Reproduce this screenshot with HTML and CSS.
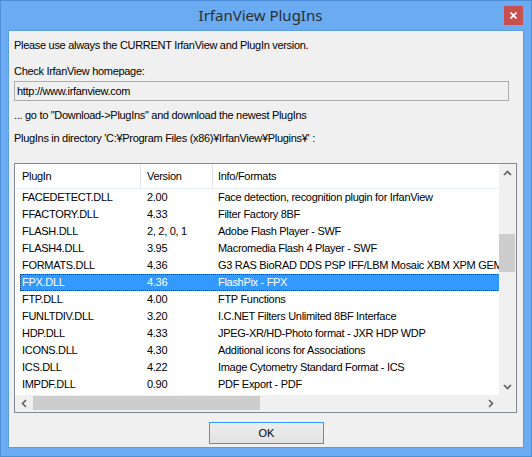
FILE: index.html
```html
<!DOCTYPE html>
<html>
<head>
<meta charset="utf-8">
<link rel="stylesheet" href="styles.css">
</head>
<body>
<div class="window">
  <div class="titlebar">
    <div class="title">IrfanView PlugIns</div>
    <div class="close"><svg width="7" height="7" viewBox="0 0 7 7"><path d="M0.5 0.5 L6.5 6.5 M6.5 0.5 L0.5 6.5" stroke="#fff" stroke-width="1.8"/></svg></div>
  </div>
  <div class="client">
    <div class="line l1">Please use always the CURRENT IrfanView and PlugIn version.</div>
    <div class="line l2">Check IrfanView homepage:</div>
    <div class="edit">http://www.irfanview.com</div>
    <div class="line l3">... go to "Download-&gt;PlugIns" and download the newest PlugIns</div>
    <div class="line l4">PlugIns in directory 'C:¥Program Files (x86)¥IrfanView¥Plugins¥' :</div>
    <div class="list">
      <div class="content">
        <div class="header">
          <div class="hc c1">PlugIn</div>
          <div class="hc c2">Version</div>
          <div class="hc c3">Info/Formats</div>
        </div>
        <div class="rows">
          <div class="row"><span class="c1">FACEDETECT.DLL</span><span class="c2">2.00</span><span class="c3">Face detection, recognition plugin for IrfanView</span></div>
          <div class="row"><span class="c1">FFACTORY.DLL</span><span class="c2">4.33</span><span class="c3">Filter Factory 8BF</span></div>
          <div class="row"><span class="c1">FLASH.DLL</span><span class="c2">2, 2, 0, 1</span><span class="c3">Adobe Flash Player - SWF</span></div>
          <div class="row"><span class="c1">FLASH4.DLL</span><span class="c2">3.95</span><span class="c3">Macromedia Flash 4 Player - SWF</span></div>
          <div class="row"><span class="c1">FORMATS.DLL</span><span class="c2">4.36</span><span class="c3">G3 RAS BioRAD DDS PSP IFF/LBM Mosaic XBM XPM GEM</span></div>
          <div class="row selected"><span class="c1">FPX.DLL</span><span class="c2">4.36</span><span class="c3">FlashPix - FPX</span></div>
          <div class="row"><span class="c1">FTP.DLL</span><span class="c2">4.00</span><span class="c3">FTP Functions</span></div>
          <div class="row"><span class="c1">FUNLTDIV.DLL</span><span class="c2">3.20</span><span class="c3">I.C.NET Filters Unlimited 8BF Interface</span></div>
          <div class="row"><span class="c1">HDP.DLL</span><span class="c2">4.33</span><span class="c3">JPEG-XR/HD-Photo format - JXR HDP WDP</span></div>
          <div class="row"><span class="c1">ICONS.DLL</span><span class="c2">4.30</span><span class="c3">Additional icons for Associations</span></div>
          <div class="row"><span class="c1">ICS.DLL</span><span class="c2">4.22</span><span class="c3">Image Cytometry Standard Format - ICS</span></div>
          <div class="row"><span class="c1">IMPDF.DLL</span><span class="c2">0.90</span><span class="c3">PDF Export - PDF</span></div>
        </div>
      </div>
      <div class="vscroll">
        <div class="arrow"><svg width="9" height="6" viewBox="0 0 9 6"><path d="M1 5 L4.5 1.5 L8 5" fill="none" stroke="#606060" stroke-width="1.6"/></svg></div>
        <div class="vtrack"><div class="vthumb"></div></div>
        <div class="arrow"><svg width="9" height="6" viewBox="0 0 9 6"><path d="M1 1 L4.5 4.5 L8 1" fill="none" stroke="#606060" stroke-width="1.6"/></svg></div>
      </div>
      <div class="hscroll">
        <div class="harrow"><svg width="6" height="9" viewBox="0 0 6 9"><path d="M5 1 L1.5 4.5 L5 8" fill="none" stroke="#606060" stroke-width="1.6"/></svg></div>
        <div class="htrack"><div class="hthumb"></div></div>
        <div class="harrow"><svg width="6" height="9" viewBox="0 0 6 9"><path d="M1 1 L4.5 4.5 L1 8" fill="none" stroke="#606060" stroke-width="1.6"/></svg></div>
      </div>
      <div class="corner"></div>
    </div>
    <div class="buttons"><div class="button">OK</div></div>
  </div>
</div>
</body>
</html>
```
FILE: styles.css
```css
* { box-sizing: border-box; }
html, body { margin: 0; padding: 0; }
body { width: 532px; height: 457px; overflow: hidden; font-family: "Liberation Sans", Arial, sans-serif; font-size: 11px; color: #000; }
.window { width: 532px; height: 457px; background: #6aabf1; border: 1px solid #4d8ed9; padding: 0 7px 8px 7px; display: flex; flex-direction: column; }
.titlebar { height: 29px; display: flex; align-items: flex-start; margin: 0 -7px; }
.title { flex: 1; text-align: center; font-family: "Noto Sans", sans-serif; font-size: 15px; line-height: 28px; color: #2e2e2e; padding-left: 16px; }
.close { width: 19px; height: 19px; margin-top: 5px; margin-right: 8px; background: #c75050; display: flex; align-items: center; justify-content: center; }
.close svg { display: block; }
.client { flex: 1; background: #f0f0f0; border: 1px solid #5a9be6; padding: 0 0 0 5px; display: flex; flex-direction: column; }
.line { height: 13px; line-height: 13px; letter-spacing: -0.3px; white-space: nowrap; }
.l1 { margin-top: 8px; }
.l2 { margin-top: 13px; }
.edit { margin-top: 3px; width: 495px; height: 20px; border: 1px solid #adadad; padding-left: 2px; line-height: 18px; letter-spacing: -0.3px; }
.l3 { margin-top: 8px; }
.l4 { margin-top: 10px; }
.list { margin-top: 18px; width: 503px; height: 250px; border: 1px solid #828790; background: #fff; display: grid; grid-template-columns: 484px 17px; grid-template-rows: 231px 17px; }
.content { overflow: hidden; position: relative; }
.header { height: 25px; display: flex; border-bottom: 1px solid #e5edf8; }
.hc { height: 24px; line-height: 25px; border-right: 1px solid #e5e5e5; letter-spacing: -0.3px; white-space: nowrap; }
.hc.c1 { width: 126px; padding-left: 7px; }
.hc.c2 { width: 72px; padding-left: 6px; }
.hc.c3 { flex: 1; padding-left: 5px; border-right: none; }
.rows { padding-left: 5px; }
.row { height: 17px; line-height: 17px; display: flex; white-space: nowrap; width: 600px; letter-spacing: -0.3px; }
.row span { display: block; overflow: hidden; }
.row .c1 { width: 121px; padding-left: 2px; }
.row .c2 { width: 72px; padding-left: 6px; }
.row .c3 { flex: 1; padding-left: 5px; }
.row.selected { background: #3399ff; color: #fff; outline: 1px dotted #1a3b66; outline-offset: -1px; }
.vscroll { background: #f0f0f0; display: flex; flex-direction: column; }
.arrow { height: 17px; display: flex; align-items: center; justify-content: center; }
.vtrack { flex: 1; position: relative; }
.vthumb { position: absolute; left: 0; width: 16px; top: 53px; height: 38px; background: #cdcdcd; }
.hscroll { background: #f0f0f0; display: flex; }
.harrow { width: 17px; display: flex; align-items: center; justify-content: center; }
.htrack { flex: 1; position: relative; }
.hthumb { position: absolute; top: 1px; height: 14px; left: 1px; width: 227px; background: #cdcdcd; }
.corner { background: #f0f0f0; }
.buttons { margin-top: 9px; display: flex; justify-content: flex-start; padding-left: 195px; }
.button { width: 115px; height: 22px; border: 1px solid #3399ff; background: linear-gradient(#ececec, #e2e2e2); text-align: center; line-height: 20px; font-size: 11px; }
```
